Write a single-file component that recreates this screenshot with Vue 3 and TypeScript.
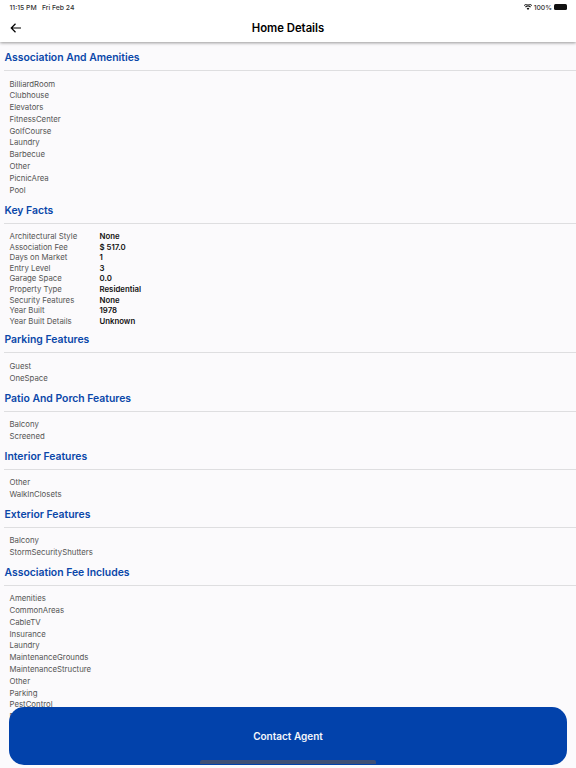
<script setup lang="ts">
interface Fact { label: string; value: string }
interface Section { title: string; items?: string[]; facts?: Fact[] }

const sections: Section[] = [
  { title: 'Association And Amenities', items: ['BilliardRoom', 'Clubhouse', 'Elevators', 'FitnessCenter', 'GolfCourse', 'Laundry', 'Barbecue', 'Other', 'PicnicArea', 'Pool'] },
  { title: 'Key Facts', facts: [
    { label: 'Architectural Style', value: 'None' },
    { label: 'Association Fee', value: '$ 517.0' },
    { label: 'Days on Market', value: '1' },
    { label: 'Entry Level', value: '3' },
    { label: 'Garage Space', value: '0.0' },
    { label: 'Property Type', value: 'Residential' },
    { label: 'Security Features', value: 'None' },
    { label: 'Year Built', value: '1978' },
    { label: 'Year Built Details', value: 'Unknown' },
  ] },
  { title: 'Parking Features', items: ['Guest', 'OneSpace'] },
  { title: 'Patio And Porch Features', items: ['Balcony', 'Screened'] },
  { title: 'Interior Features', items: ['Other', 'WalkInClosets'] },
  { title: 'Exterior Features', items: ['Balcony', 'StormSecurityShutters'] },
  { title: 'Association Fee Includes', items: ['Amenities', 'CommonAreas', 'CableTV', 'Insurance', 'Laundry', 'MaintenanceGrounds', 'MaintenanceStructure', 'Other', 'Parking', 'PestControl', 'Pool'] },
]
</script>

<template>
  <div class="page">
    <header class="top">
      <div class="status">
        <span>11:15 PM&nbsp;&nbsp;&nbsp;Fri Feb 24</span>
        <span class="status-right">
          <svg class="wifi" width="8" height="6" viewBox="0 0 20 15" aria-hidden="true">
            <path d="M10 15 6.6 11.2a5 5 0 0 1 6.8 0zM4.6 9A8 8 0 0 1 15.4 9l2-2.2a11 11 0 0 0-14.8 0zM.6 4.7a14 14 0 0 1 18.8 0l1-1.2-.4-.5a15.5 15.5 0 0 0-20 0l-.4.5z" fill="#111" />
          </svg>
          <span>100%</span>
          <span class="battery"></span>
        </span>
      </div>
      <nav class="nav">
        <svg class="back" width="12" height="12" viewBox="0 0 24 24" aria-hidden="true">
          <path d="M22 12H3M11 3.5 2.5 12l8.5 8.5" fill="none" stroke="#000" stroke-width="2.4" />
        </svg>
        <h1 class="nav-title">Home Details</h1>
      </nav>
    </header>

    <main class="content">
      <section v-for="s in sections" :key="s.title" class="section">
        <h2 class="heading">{{ s.title }}</h2>
        <hr class="rule" />
        <ul v-if="s.items" class="list">
          <li v-for="i in s.items" :key="i">{{ i }}</li>
        </ul>
        <div v-else class="facts">
          <div v-for="f in s.facts" :key="f.label" class="fact">
            <span class="fact-label">{{ f.label }}</span>
            <span class="fact-value">{{ f.value }}</span>
          </div>
        </div>
      </section>
    </main>

    <div class="cta">
      <button class="cta-btn" type="button">Contact Agent</button>
      <span class="home-bar"></span>
    </div>
  </div>
</template>

<style>
html, body { margin: 0; padding: 0; background: #fbfafc; }
</style>

<style scoped>
.page {
  position: relative;
  width: 576px;
  height: 768px;
  overflow: hidden;
  display: flex;
  flex-direction: column;
  background: #fbfafc;
  font-family: Inter, "Liberation Sans", sans-serif;
}
.top {
  flex: none;
  height: 42px;
  background: #fff;
  box-shadow: 0 1px 3px rgba(0, 0, 0, 0.4);
  position: relative;
  z-index: 1;
}
.status {
  height: 14px;
  padding: 0 9px 0 9.5px;
  display: flex;
  justify-content: space-between;
  align-items: center;
  font-size: 6.8px;
  font-weight: 500;
  color: #333;
}
.status-right { display: flex; align-items: center; gap: 2px; }
.battery {
  width: 13px;
  height: 5.5px;
  border-radius: 1.5px;
  background: #111;
  display: block;
}
.nav {
  height: 28px;
  display: flex;
  align-items: center;
  justify-content: center;
  position: relative;
}
.back { position: absolute; left: 10px; top: 8px; }
.nav-title {
  margin: 0;
  font-size: 11.3px;
  font-weight: 600;
  color: #000;
}
.content {
  flex: 1;
  min-height: 0;
  overflow: hidden;
  padding-top: 9px;
}
.section { padding-bottom: 7px; }
.section:first-child { padding-bottom: 7.6px; }
.heading {
  margin: 0 0 5px;
  padding-left: 4.5px;
  font-size: 10.4px;
  line-height: 14px;
  font-weight: 600;
  color: #0a47a9;
}
.rule {
  margin: 0 0 0 4px;
  border: 0;
  border-top: 1px solid #dedee0;
  height: 0;
}
.list {
  list-style: none;
  margin: 0;
  padding: 7.5px 0 0 9.5px;
  font-size: 7.8px;
  line-height: 11.8px;
  color: #555;
}
.facts { padding: 7px 0 0 9.5px; }
.fact {
  display: grid;
  grid-template-columns: 90px 1fr;
  font-size: 7.8px;
  line-height: 10.6px;
}
.fact-label { color: #555; }
.fact-value { color: #111; font-weight: 600; }
.cta {
  position: absolute;
  left: 9px;
  top: 707px;
  width: 558px;
  height: 58px;
}
.cta-btn {
  width: 100%;
  height: 100%;
  border: 0;
  border-radius: 15px;
  background: #0242ab;
  color: #f4f7fc;
  font-family: inherit;
  font-size: 10px;
  font-weight: 600;
  padding: 0;
}
.home-bar {
  position: absolute;
  left: 191px;
  top: 53px;
  width: 176px;
  height: 4px;
  background: #3f5076;
  border-radius: 2px 2px 0 0;
}
</style>
